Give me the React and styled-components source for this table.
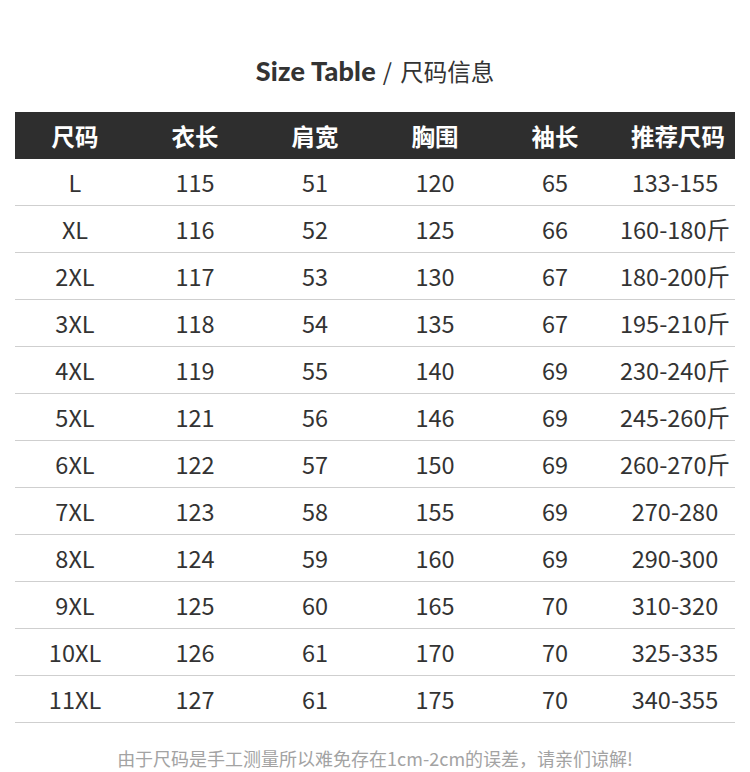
import React from 'react';
import styled, { createGlobalStyle } from 'styled-components';

const Global = createGlobalStyle`
  body {
    margin: 0;
    background: #fff;
    font-family: "Noto Sans CJK SC", "Noto Sans", sans-serif;
  }
`;

const Page = styled.div`
  width: 750px;
  height: 772px;
  overflow: hidden;
  padding: 0 15px;
  box-sizing: border-box;
`;

const Title = styled.h1`
  margin: 0;
  padding-top: 53px;
  height: 112px;
  box-sizing: border-box;
  display: flex;
  justify-content: center;
  align-items: baseline;
  gap: 7px;
  font-size: 25px;
  line-height: 36px;
  font-weight: 400;
  color: #333;
`;

const TitleEn = styled.span`
  font-family: "Lato", "Noto Sans", sans-serif;
  font-size: 27px;
  font-weight: 900;
  letter-spacing: 0.2px;
`;

const TitleCn = styled.span`
  font-family: "Noto Sans CJK SC", sans-serif;
  font-size: 23.5px;
  word-spacing: 3px;
`;

const Table = styled.div`
  display: grid;
  grid-template-columns: repeat(6, 120px);
`;

const HeadCell = styled.div`
  height: 47px;
  background: #2e2e2e;
  color: #fff;
  font-weight: 700;
  font-size: 23.5px;
  display: flex;
  align-items: center;
  justify-content: center;
  padding-left: ${p => (p.$last ? '6px' : '0')};
`;

const Cell = styled.div`
  height: 47px;
  box-sizing: border-box;
  border-bottom: 1px solid #cfcfcf;
  color: #333;
  font-size: 23.5px;
  display: flex;
  align-items: center;
  justify-content: center;
`;

const Note = styled.p`
  margin: 22px 0 0;
  text-align: center;
  font-size: 18px;
  line-height: 26px;
  color: #a3a3a3;
`;

const heads = ['尺码', '衣长', '肩宽', '胸围', '袖长', '推荐尺码'];

const rows = [
  ['L', '115', '51', '120', '65', '133-155'],
  ['XL', '116', '52', '125', '66', '160-180斤'],
  ['2XL', '117', '53', '130', '67', '180-200斤'],
  ['3XL', '118', '54', '135', '67', '195-210斤'],
  ['4XL', '119', '55', '140', '69', '230-240斤'],
  ['5XL', '121', '56', '146', '69', '245-260斤'],
  ['6XL', '122', '57', '150', '69', '260-270斤'],
  ['7XL', '123', '58', '155', '69', '270-280'],
  ['8XL', '124', '59', '160', '69', '290-300'],
  ['9XL', '125', '60', '165', '70', '310-320'],
  ['10XL', '126', '61', '170', '70', '325-335'],
  ['11XL', '127', '61', '175', '70', '340-355'],
];

export default function App() {
  return (
    <Page>
      <Global />
      <Title>
        <TitleEn>Size Table</TitleEn>
        <TitleCn>/ 尺码信息</TitleCn>
      </Title>
      <Table>
        {heads.map((h, i) => (
          <HeadCell key={h} $last={i === heads.length - 1}>{h}</HeadCell>
        ))}
        {rows.map(r =>
          r.map((v, i) => <Cell key={r[0] + i}>{v}</Cell>)
        )}
      </Table>
      <Note>由于尺码是手工测量所以难免存在1cm-2cm的误差，请亲们谅解!</Note>
    </Page>
  );
}
